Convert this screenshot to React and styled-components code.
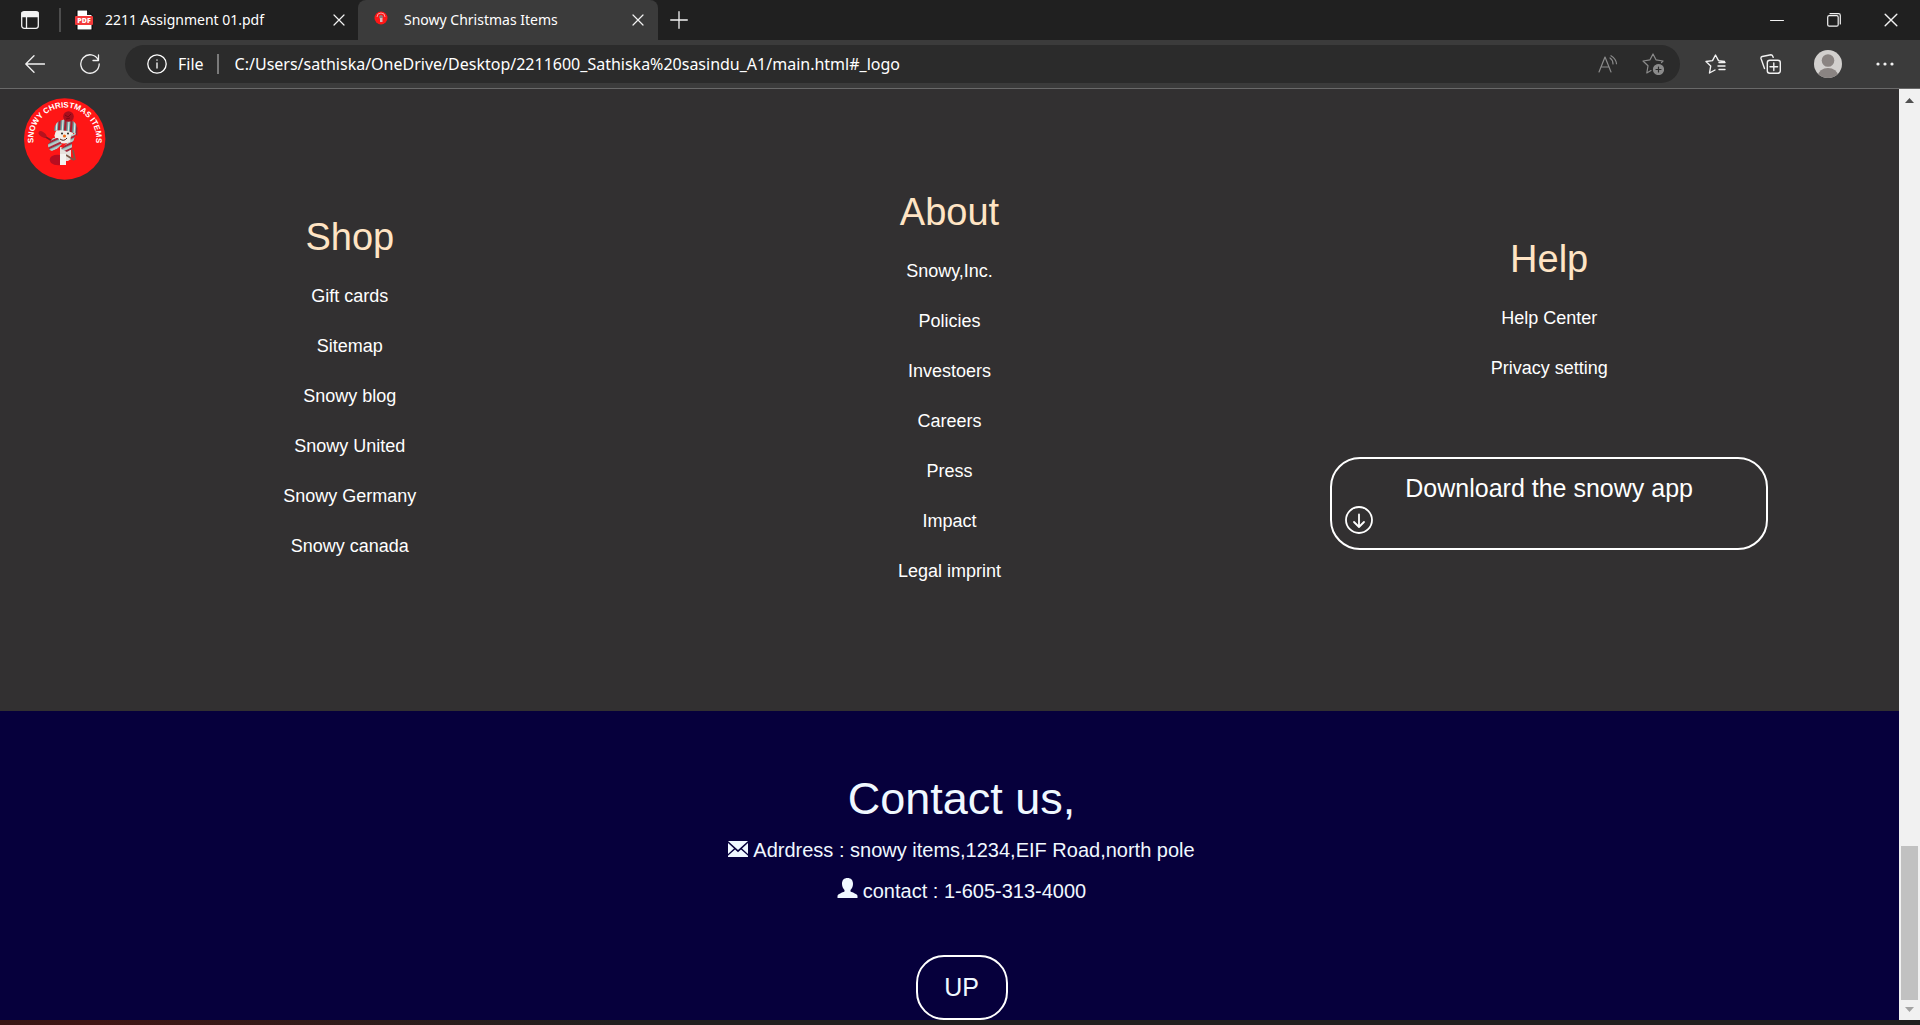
import React from "react";
import styled, { createGlobalStyle } from "styled-components";

const ui = `"Segoe UI", "Noto Sans", "Open Sans", sans-serif`;
const body = `"Liberation Sans", Arial, sans-serif`;

const Global = createGlobalStyle`
  * { box-sizing: border-box; }
  body { margin: 0; font-family: ${body}; }
  button { font: inherit; color: inherit; background: none; border: 0; padding: 0; margin: 0; }
  h2, ul, p { margin: 0; padding: 0; font-weight: 400; list-style: none; }
  a { color: inherit; text-decoration: none; }
`;

const Window = styled.div`
  display: flex;
  flex-direction: column;
  height: 100vh;
  overflow: hidden;
  color: #fff;
  background: linear-gradient(90deg, #371614, #3f1514 5%, #2d1c1b 20%, #211f1f 32%);
`;

const TabStrip = styled.header`
  display: flex;
  align-items: center;
  flex: none;
  height: 40px;
  background: #202020;
  font: 14px/20px ${ui};
`;

const IconButton = styled.button`
  display: flex;
  align-items: center;
  justify-content: center;
  flex: none;
  width: ${(p) => p.$width || 56}px;
  height: 38px;
  color: ${(p) => p.$color || "#f2f2f2"};
`;

const Divider = styled.span`
  flex: none;
  width: 2px;
  height: ${(p) => p.$height}px;
  margin-right: ${(p) => p.$after}px;
  background: ${(p) => p.$color};
`;

const Tab = styled.div`
  display: flex;
  align-items: center;
  flex: none;
  width: ${(p) => p.$width}px;
  height: 40px;
  padding-left: 14px;
  border-radius: 8px 8px 0 0;
  background: ${(p) => (p.$active ? "#3b3b3b" : "transparent")};
`;

const TabTitle = styled.span`
  flex: 1;
  padding-left: ${(p) => p.$gap}px;
  white-space: nowrap;
`;

const WindowControls = styled.div`
  display: flex;
  margin-left: auto;
`;

const Toolbar = styled.div`
  display: flex;
  align-items: center;
  flex: none;
  height: 49px;
  padding-left: 7px;
  background: #3b3b3b;
  border-bottom: 1px solid #696969;
  font: 16px/24px ${ui};
`;

const AddressBar = styled.div`
  display: flex;
  align-items: center;
  flex: 1;
  min-width: 0;
  height: 38px;
  margin: 0 16px 0 8px;
  padding: 0 4px 0 22px;
  border-radius: 19px;
  background: #2b2b2b;
`;

const SchemeLabel = styled.label`
  padding: 0 13px 0 11px;
`;

const AddressInput = styled.input`
  flex: 1;
  min-width: 0;
  padding: 0;
  border: 0;
  outline: 0;
  background: none;
  color: #fff;
  font: inherit;
`;

const Viewport = styled.div`
  display: flex;
  flex: 1;
  min-height: 0;
  margin-bottom: 5px;
`;

const Page = styled.main`
  display: flex;
  flex-direction: column;
  flex: 1;
  min-width: 0;
  overflow: hidden;
`;

const Directory = styled.section`
  flex: none;
  padding: 9px 50px 115px;
  background: #323031;
`;

const LogoLink = styled.a`
  display: block;
  width: 82px;
  height: 82px;
  margin-left: -26px;
`;

const Columns = styled.div`
  display: grid;
  grid-template-columns: repeat(3, 1fr);
  align-items: center;
`;

const Column = styled.nav`
  display: flex;
  flex-direction: column;
  align-items: center;
`;

const ColumnTitle = styled.h2`
  margin-bottom: 2px;
  color: bisque;
  font-size: 38px;
  line-height: 64px;
`;

const LinkList = styled.ul`
  font-size: 18px;
  line-height: 50px;
  text-align: center;
`;

const DownloadButton = styled.button`
  display: flex;
  flex-direction: column;
  gap: 2px;
  width: 73%;
  height: 93px;
  margin-top: 64px;
  padding: 13px;
  border: 2px solid #fff;
  border-radius: 30px;
  font-size: 25px;
  line-height: 32px;
`;

const DownloadText = styled.span`
  align-self: center;
`;

const Contact = styled.section`
  display: flex;
  flex-direction: column;
  align-items: center;
  flex: 1;
  padding: 60px 0 0 24px;
  background: #06003c;
  color: aliceblue;
`;

const ContactTitle = styled.h2`
  margin-bottom: 3px;
  font-size: 45px;
  line-height: 56px;
`;

const ContactLine = styled.p`
  display: flex;
  align-items: baseline;
  gap: 5px;
  font-size: 20px;
  line-height: 41px;
`;

const UpButton = styled.button`
  flex: none;
  width: 92px;
  height: 65px;
  margin-top: 43px;
  border: 2px solid #fff;
  border-radius: 28px;
  font-size: 25px;
`;

const Scrollbar = styled.div`
  display: flex;
  flex-direction: column;
  align-items: center;
  justify-content: space-between;
  flex: none;
  width: 21px;
  padding: 9px 0 8px;
  background: #f1f1f1;
`;

const Thumb = styled.div`
  width: 17px;
  height: 154px;
  margin: auto 0 7px;
  background: #c1c1c1;
`;

const stroke = { fill: "none", stroke: "currentColor", strokeLinecap: "round", strokeLinejoin: "round" };

const CloseIcon = ({ size = 12 }) => (
  <svg width={size} height={size} viewBox="0 0 12 12" {...stroke} strokeWidth="1.2"><path d="M1 1l10 10M11 1L1 11" /></svg>
);

const LogoArt = () => (
  <svg width="82" height="82" viewBox="0 0 82 82" role="img" aria-label="Snowy Christmas Items">
    <defs>
      <path id="logo-arc" d="M9.500 45a31.500 31.500 0 1 1 62.500 0" />
      <pattern id="knit" width="6" height="20" patternUnits="userSpaceOnUse" patternTransform="rotate(4)">
        <rect width="6" height="20" fill="#6fb0ae" />
        <rect width="2.500" height="20" fill="#a31f30" />
        <rect x="4" width="1" height="20" fill="#efe5df" />
      </pattern>
      <pattern id="scarf" width="12" height="5" patternUnits="userSpaceOnUse" patternTransform="rotate(-25)">
        <rect width="12" height="5" fill="#7cb3b1" />
        <rect width="12" height="2" fill="#a8283a" />
        <rect y="3.500" width="12" height="1" fill="#efe5df" />
      </pattern>
    </defs>
    <circle cx="40.700" cy="41" r="40.700" fill="#ff1616" />
    <text fill="#fff" fontFamily="Liberation Sans, Arial, sans-serif" fontWeight="700" fontSize="8">
      <textPath href="#logo-arc" startOffset="50%" textAnchor="middle">SNOWY CHRISTMAS ITEMS</textPath>
    </text>
    <path d="M20 38l10 6" stroke="#7a1a20" strokeWidth="1.500" />
    <ellipse cx="18.500" cy="36.500" rx="4.500" ry="2.300" transform="rotate(35 18.500 36.500)" fill="#b5121d" />
    <path d="M36 49l11 3v9l-3 2h-8z" fill="#e6e2dd" />
    <path d="M42 57l8 5M49 52l2 10" stroke="#7b5a48" strokeWidth="1.700" fill="none" />
    <path d="M36 57q-4-1-8 1-4 3-1 7 4 3 10 2z" fill="#b80d20" />
    <path d="M36 56h6v11h-6z" fill="#f4f4f1" />
    <path d="M41 47l7-6v10l-5 3-6-3z" fill="url(#scarf)" />
    <ellipse cx="40" cy="37.500" rx="9.500" ry="8" fill="#f0ece7" />
    <path d="M30 33q0-10 10-11.500 12-1 13.500 8.500v8l-4-3q-9-4-20-2z" fill="url(#knit)" />
    <path d="M47 37l5-2-3 9-3 2z" fill="url(#scarf)" />
    <circle cx="44.500" cy="18.500" r="5.300" fill="#a70f1d" />
    <path d="M41 17l3 2 3-3M42 21l4-1" stroke="#7d0813" fill="none" />
    <circle cx="38" cy="35.500" r="1" fill="#222" />
    <circle cx="44" cy="35.500" r="1" fill="#222" />
    <circle cx="40.500" cy="38" r="1.600" fill="#ed6b17" />
    <path d="M36 41q4 3 7-1" stroke="#421b19" fill="none" />
    <path d="M34 40l-5 0-5 6q0 6 4 7l5-2 5-5z" fill="url(#scarf)" />
  </svg>
);

const SHOP = ["Gift cards", "Sitemap", "Snowy blog", "Snowy United", "Snowy Germany", "Snowy canada"];
const ABOUT = ["Snowy,Inc.", "Policies", "Investoers", "Careers", "Press", "Impact", "Legal imprint"];
const HELP = ["Help Center", "Privacy setting"];

function LinkColumn({ title, items, children }) {
  return (
    <Column aria-label={title}>
      <ColumnTitle>{title}</ColumnTitle>
      <LinkList>
        {items.map((item) => (
          <li key={item}><a href="#_logo">{item}</a></li>
        ))}
      </LinkList>
      {children}
    </Column>
  );
}

function BrowserTabs() {
  return (
    <TabStrip>
      <IconButton $width={59} aria-label="Tab actions">
        <svg width="18" height="18" viewBox="0 0 18 18" {...stroke} strokeWidth="1.300">
          <rect x=".7" y=".7" width="16.600" height="16.600" rx="2.500" />
          <path d="M1 1.500h16v4H1z" fill="currentColor" /><path d="M5.500 5v12" />
        </svg>
      </IconButton>
      <Divider $color="#4d4d4d" $height={24} $after={0} />
      <Tab $width={297}>
        <svg width="18" height="20" viewBox="0 0 18 20">
          <path d="M2 0h10l5 5v15H2z" fill="#fff" stroke="#000" /><path d="M12 0l5 5h-5z" fill="#222" />
          <rect y="6" width="18" height="9" rx="1" fill="#f23a3a" />
          <text x="9" y="13" textAnchor="middle" fontFamily="Open Sans, sans-serif" fontSize="7" fontWeight="800" fill="#fff">PDF</text>
        </svg>
        <TabTitle $gap={12}>2211 Assignment 01.pdf</TabTitle>
        <IconButton $width={38} aria-label="Close tab"><CloseIcon /></IconButton>
      </Tab>
      <Tab $width={300} $active>
        <svg width="20" height="20" viewBox="0 0 20 20">
          <circle cx="9" cy="8" r="6.500" fill="#ff1616" /><path d="M5 7q0-4 4-4t4 4" stroke="#ff9a9a" fill="none" />
          <circle cx="9" cy="7" r="2" fill="#8f7d80" /><path d="M8 8h2.500v4H8z" fill="#d8b9b9" />
        </svg>
        <TabTitle $gap={12}>Snowy Christmas Items</TabTitle>
        <IconButton $width={40} aria-label="Close tab"><CloseIcon /></IconButton>
      </Tab>
      <IconButton $width={42} aria-label="New tab">
        <svg width="18" height="18" viewBox="0 0 18 18" {...stroke} strokeWidth="1.300"><path d="M9 .7v16.600M.7 9h16.600" /></svg>
      </IconButton>
      <WindowControls>
        <IconButton $width={58} aria-label="Minimize">
          <svg width="14" height="14" viewBox="0 0 14 14" {...stroke}><path d="M.5 7.500h13" /></svg>
        </IconButton>
        <IconButton $width={56} aria-label="Restore">
          <svg width="14" height="14" viewBox="0 0 14 14" {...stroke} strokeWidth="1.200">
            <rect x=".7" y="2.700" width="10.500" height="10.500" rx="1.500" /><path d="M3 .7h8.500q1.800 0 1.800 1.800V11" />
          </svg>
        </IconButton>
        <IconButton $width={58} aria-label="Close window"><CloseIcon size={14} /></IconButton>
      </WindowControls>
    </TabStrip>
  );
}

function BrowserToolbar() {
  return (
    <Toolbar>
      <IconButton aria-label="Back">
        <svg width="20" height="18" viewBox="0 0 20 18" {...stroke} strokeWidth="1.300"><path d="M19.500 9H1M9 .8L.8 9 9 17.200" /></svg>
      </IconButton>
      <IconButton aria-label="Refresh" $width={54}>
        <svg width="20" height="20" viewBox="0 0 20 20" {...stroke} strokeWidth="1.300"><path d="M18.300 6A9.200 9.200 0 1 0 19.200 10M18.500 1v5.500H13" /></svg>
      </IconButton>
      <AddressBar>
        <svg width="20" height="20" viewBox="0 0 20 20" {...stroke} strokeWidth="1.300"><circle cx="10" cy="10" r="9.200" /><path d="M10 9v5M10 6v.2" /></svg>
        <SchemeLabel htmlFor="address">File</SchemeLabel>
        <Divider $color="#7a7a7a" $height={20} $after={16} />
        <AddressInput id="address" readOnly value="C:/Users/sathiska/OneDrive/Desktop/2211600_Sathiska%20sasindu_A1/main.html#_logo" />
        <IconButton $width={44} $color="#8b8b8b" aria-label="Read aloud">
          <svg width="20" height="18" viewBox="0 0 20 18" {...stroke} strokeWidth="1.200"><path d="M1 17L7 2l6 15M3 12h8M12 3q3 2 3 6M13 .7q5 3 5.500 8" /></svg>
        </IconButton>
        <IconButton $width={46} $color="#8b8b8b" aria-label="Add to favorites">
          <svg width="22" height="22" viewBox="0 0 22 22" {...stroke} strokeWidth="1.200">
            <path d="M19.500 9.500L21 8l-7-1.200L11 1 8 6.800 1 8l5 4.800L4.800 20 9 17.600" />
            <circle cx="16.500" cy="16.500" r="5" fill="currentColor" /><path d="M14 16.500h5M16.500 14v5" stroke="#2b2b2b" />
          </svg>
        </IconButton>
      </AddressBar>
      <IconButton $width={38} aria-label="Favorites">
        <svg width="21" height="20" viewBox="0 0 21 20" {...stroke} strokeWidth="1.400">
          <path d="M19.500 7.500l-6-.9L10.500 1 7.500 6.600 1 7.500l4.700 4.600-1.200 6.900 5.500-3M14 8.500h6M13 12h7M14 15.500h6" />
        </svg>
      </IconButton>
      <IconButton $width={72} aria-label="Collections">
        <svg width="21" height="20" viewBox="0 0 21 20" {...stroke} strokeWidth="1.400">
          <rect x="7.300" y="6.300" width="13" height="13" rx="2.500" /><path d="M13.800 9v7.600M10 12.800h7.600M4.500 14.500L1 4.500Q.7 3 2.200 2.500L11 .8q1.500 0 2.200 2.500" />
        </svg>
      </IconButton>
      <IconButton $width={44} aria-label="Profile">
        <svg width="28" height="28" viewBox="0 0 28 28">
          <clipPath id="avatar"><circle cx="14" cy="14" r="14" /></clipPath>
          <g clipPath="url(#avatar)"><path d="M0 0h28v28H0z" fill="#d2d0ce" /><circle cx="14" cy="10.500" r="6.300" fill="#8a8482" /><ellipse cx="14" cy="26" rx="10" ry="8" fill="#8a8482" /></g>
        </svg>
      </IconButton>
      <IconButton $width={70} aria-label="Settings and more">
        <svg width="18" height="4" viewBox="0 0 18 4" fill="currentColor"><circle cx="2" cy="2" r="1.600" /><circle cx="9" cy="2" r="1.600" /><circle cx="16" cy="2" r="1.600" /></svg>
      </IconButton>
    </Toolbar>
  );
}

export default function App() {
  return (
    <Window>
      <Global />
      <BrowserTabs />
      <BrowserToolbar />
      <Viewport>
        <Page>
          <Directory>
            <LogoLink id="_logo" href="#_logo"><LogoArt /></LogoLink>
            <Columns>
              <LinkColumn title="Shop" items={SHOP} />
              <LinkColumn title="About" items={ABOUT} />
              <LinkColumn title="Help" items={HELP}>
                <DownloadButton>
                  <DownloadText>Downloard the snowy app</DownloadText>
                  <svg width="28" height="28" viewBox="0 0 28 28" {...stroke} strokeWidth="1.800">
                    <circle cx="14" cy="14" r="13" /><path d="M14 8.500v12M9 16l5 5 5-5" />
                  </svg>
                </DownloadButton>
              </LinkColumn>
            </Columns>
          </Directory>
          <Contact>
            <ContactTitle>Contact us,</ContactTitle>
            <ContactLine>
              <svg width="20" height="16" viewBox="0 0 20 16" fill="currentColor">
                <path d="M0 0h20l-10 9zM0 2l6 5.500L0 13zM20 2v11l-6-5.500zM0 16v-1.200l7-6.300 3 2.700 3-2.700 7 6.300V16z" />
              </svg>
              Adrdress : snowy items,1234,EIF Road,north pole
            </ContactLine>
            <ContactLine>
              <svg width="21" height="20" viewBox="0 0 21 20" fill="currentColor">
                <path d="M10.500 0c3.500 0 5.500 2 5.500 6 0 3-1.500 5-2.500 6v1.500c2 1 7 2.500 7 4.500v2H.5v-2c0-2 5-3.500 7-4.500V12C6.500 11 5 9 5 6c0-4 2-6 5.500-6z" />
              </svg>
              contact : 1-605-313-4000
            </ContactLine>
            <UpButton>UP</UpButton>
          </Contact>
        </Page>
        <Scrollbar aria-hidden="true">
          <svg width="9" height="5" viewBox="0 0 9 5"><path d="M4.500 0L9 5H0z" fill="#505050" /></svg>
          <Thumb />
          <svg width="9" height="5" viewBox="0 0 9 5"><path d="M0 0h9L4.500 5z" fill="#a3a3a3" /></svg>
        </Scrollbar>
      </Viewport>
    </Window>
  );
}
